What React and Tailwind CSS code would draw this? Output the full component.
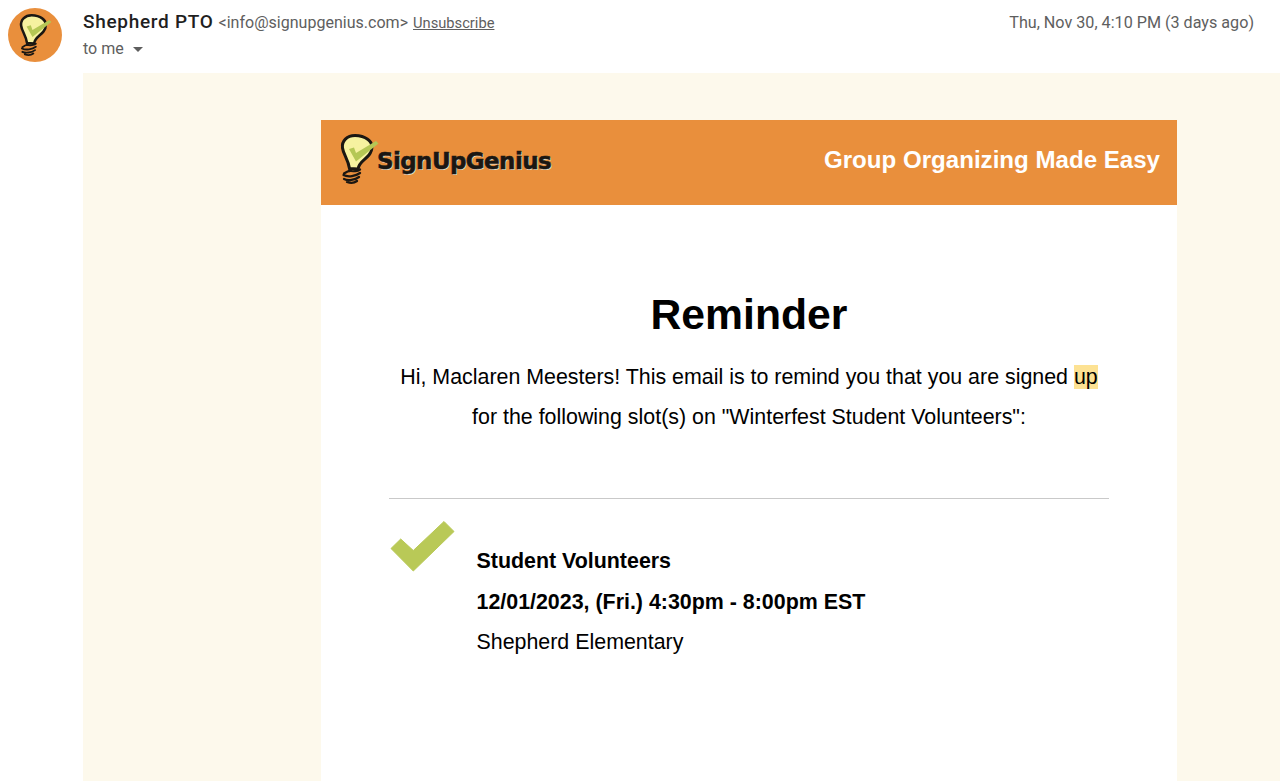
function Bulb({ className }) {
  return (
    <svg viewBox="0 0 40 50" className={className}>
      <path d="M16 1.500C8 1.500 2.500 7 3.500 14C4.500 21 9 25 10.500 34.500L19 35C20 28 26 26 30 21C34 16 34 9 29 5.500C25 2.500 20 1.500 16 1.500Z" fill="#f6f2a0" stroke="#1b1712" strokeWidth="3" strokeLinejoin="round" />
      <path d="M10 15L15 13.500L17 19L37 7L39.500 9.500L17 27.500Z" fill="#b5c755" />
      <path d="M10 36.500C14 38 19 37 21 35.500M5 39.500C10 36 14 36 11 37M4.500 41C9 43.500 17 42 21 39M5 45C9 47 16 46 20 43M8 48C12 49.500 16 48.500 18 47" fill="none" stroke="#1b1712" strokeWidth="2.200" strokeLinecap="round" />
    </svg>
  );
}

export default function App() {
  return (
    <div className="w-[1280px] h-[781px] overflow-hidden bg-white font-['Liberation_Sans',sans-serif]">
      <div className="flex h-[73px]">
        <div className="w-[83px] shrink-0 pt-2 pl-2">
          <div className="w-[54px] h-[54px] rounded-full bg-[#e98f3c] flex items-center justify-center">
            <Bulb className="w-[34px] h-[42px]" />
          </div>
        </div>
        <div className="flex-1 flex flex-col pt-[8px]">
          <div className="flex items-baseline h-[24px] font-['Roboto',sans-serif]">
            <span className="text-[19px] font-medium text-[#1f1f1f] tracking-[0.7px]">Shepherd PTO</span>
            <span className="ml-[5px] text-[16.050px] text-[#5e5e5e]">&lt;info@signupgenius.com&gt;</span>
            <span className="ml-[5px] text-[14.700px] text-[#5e5e5e] underline">Unsubscribe</span>
            <span className="ml-auto mr-[26px] text-[16.150px] text-[#5e5e5e]">Thu, Nov 30, 4:10 PM (3 days ago)</span>
          </div>
          <div className="flex items-center h-[26px] mt-[4px] font-['Roboto',sans-serif] text-[16px] text-[#5e5e5e]">
            <span>to me</span>
            <span className="ml-[9px] w-0 h-0 border-x-[5px] border-x-transparent border-t-[5px] border-t-[#5e5e5e]" />
          </div>
        </div>
      </div>
      <div className="ml-[83px] h-[708px] bg-[#fdf9ec] pt-[47px] pl-[238px]">
        <div className="w-[856px] h-[661px] bg-white">
          <div className="h-[85px] bg-[#e98f3c] flex items-center justify-between pl-[18px] pr-[17px]">
            <div className="flex items-center">
              <Bulb className="w-[40px] h-[50px] mb-[8px]" />
              <span className="ml-[-2px] mt-[-3px] text-[23px] font-bold text-[#1b1712] font-['DejaVu_Sans',sans-serif] tracking-[-0.6px] [-webkit-text-stroke:0.6px_#1b1712] [text-shadow:1px_1px_0_#e8e0cc]">SignUpGenius</span>
            </div>
            <span className="text-[24.100px] font-bold text-white mb-[5px] font-['Liberation_Sans',sans-serif]">Group Organizing Made Easy</span>
          </div>
          <h1 className="mt-[84px] text-center text-[42.700px] leading-[50px] font-bold text-black">Reminder</h1>
          <p className="mt-[18px] text-center text-[21.400px] leading-[40px] text-black">
            Hi, Maclaren Meesters! This email is to remind you that you are signed <span className="bg-[#fde293]">up</span>
            <br />
            for the following slot(s) on "Winterfest Student Volunteers":
          </p>
          <div className="mt-[61px] mx-[68px] h-px bg-[#c9c9c9]" />
          <div className="flex ml-[68px] mt-[21px]">
            <svg viewBox="0 0 66 52" className="w-[66px] h-[52px] shrink-0">
              <path d="M2 28.500L11.700 19L24.300 30.500L55 1.500L65 11.500L24.300 51Z" fill="#b9c957" stroke="#b9c957" strokeLinejoin="round" />
            </svg>
            <div className="ml-[21.500px] mt-[21px] text-[21.400px] leading-[40.500px] text-black">
              <div className="font-bold">Student Volunteers</div>
              <div className="font-bold">12/01/2023, (Fri.) 4:30pm - 8:00pm EST</div>
              <div>Shepherd Elementary</div>
            </div>
          </div>
        </div>
      </div>
    </div>
  );
}
